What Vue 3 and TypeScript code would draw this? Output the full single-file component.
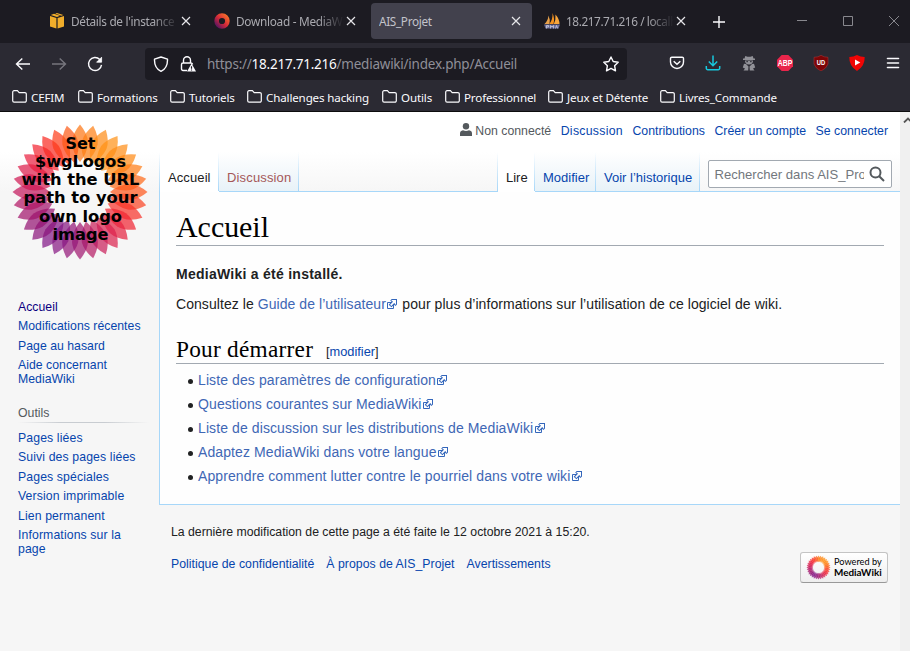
<script setup lang="ts">
interface Bookmark { label: string; width: number }
interface Petal { angle: number; color: string }

const bookmarks: Bookmark[] = [
  { label: 'CEFIM', width: 66 },
  { label: 'Formations', width: 92 },
  { label: 'Tutoriels', width: 77 },
  { label: 'Challenges hacking', width: 135 },
  { label: 'Outils', width: 63 },
  { label: 'Professionnel', width: 103 },
  { label: 'Jeux et Détente', width: 112 },
  { label: 'Livres_Commande', width: 140 },
]

const mainLinks: string[] = ['Accueil', 'Modifications récentes', 'Page au hasard', 'Aide concernant MediaWiki']
const toolLinks: string[] = [
  'Pages liées', 'Suivi des pages liées', 'Pages spéciales',
  'Version imprimable', 'Lien permanent', 'Informations sur la page',
]
const startLinks: string[] = [
  'Liste des paramètres de configuration',
  'Questions courantes sur MediaWiki',
  'Liste de discussion sur les distributions de MediaWiki',
  'Adaptez MediaWiki dans votre langue',
  'Apprendre comment lutter contre le pourriel dans votre wiki',
]
const logoLines: { text: string; length: number }[] = [
  { text: 'Set', length: 30 },
  { text: '$wgLogos', length: 91 },
  { text: 'with the URL', length: 118 },
  { text: 'path to your', length: 114 },
  { text: 'own logo', length: 83 },
  { text: 'image', length: 56 },
]

// Colour stops around the flower, clockwise from the top.
const wheel: number[][] = [
  [252, 115, 15], [255, 145, 20], [255, 135, 15], [255, 85, 25],
  [245, 35, 45], [215, 30, 80], [160, 20, 110], [125, 20, 135],
  [150, 15, 110], [195, 20, 90], [230, 25, 65], [253, 40, 25],
]
const petalCount = 32
const petals: Petal[] = Array.from({ length: petalCount }, (_, i) => {
  const pos = (i / petalCount) * wheel.length
  const a = wheel[Math.floor(pos) % wheel.length]
  const b = wheel[(Math.floor(pos) + 1) % wheel.length]
  const f = pos - Math.floor(pos)
  const mix = a.map((v, k) => Math.round(v + (b[k] - v) * f))
  return { angle: (i * 360) / petalCount, color: `rgb(${mix.join(',')})` }
})
const petalPath = 'M0-67.500Q7.500-58.500 8-50Q7.500-39 0-30Q-7.500-39-8-50Q-7.500-58.500 0-67.500z'
</script>

<template>
  <div class="window">
    <header class="chrome">
      <div class="tabstrip">
        <div class="tab t1">
          <svg class="fav" viewBox="0 0 16 16"><path d="M1 3 7.400 5v10.500L1 13.500zM15 3 8.600 5v10.500L15 13.500zM1.800 2 5 .7 11 2.700 8 4zM6.200.4 8 0l6.300 2-2 .8z" fill="#f0ad2b" /></svg>
          <span class="tab-title fade">Détails de l'instance</span>
          <svg class="close" viewBox="0 0 10 10"><path d="M1 1l8 8M9 1 1 9" /></svg>
        </div>
        <div class="tab t2">
          <svg class="fav" viewBox="0 0 16 16">
            <defs><linearGradient id="ring" x1="1" y1="0" x2="0" y2="1"><stop offset="0" stop-color="#f5702b" /><stop offset=".5" stop-color="#d72b38" /><stop offset="1" stop-color="#5c155f" /></linearGradient></defs>
            <circle cx="8" cy="8" r="5.400" fill="none" stroke="url(#ring)" stroke-width="4.600" />
          </svg>
          <span class="tab-title fade">Download - MediaWiki</span>
          <svg class="close" viewBox="0 0 10 10"><path d="M1 1l8 8M9 1 1 9" /></svg>
        </div>
        <div class="tab t3">
          <span class="tab-title">AIS_Projet</span>
          <svg class="close" viewBox="0 0 10 10"><path d="M1 1l8 8M9 1 1 9" /></svg>
        </div>
        <div class="tab t4">
          <svg class="fav" viewBox="0 0 16 16">
            <path d="M.5 11Q4 8 4.500 2.500Q6.500 7 5.500 11z" fill="#e9a24c" /><path d="M5.500 11Q9 6 8.500 0Q11 6 9.500 11z" fill="#f6921e" /><path d="M9.800 11Q12 7 11.500 1.500Q15.500 6 15.500 11z" fill="#f8a63c" />
            <path d="M0 11.500l1.500 4h13l1.500-4z" fill="#6a6d98" /><path d="M2.500 15.500v-3h2v1.500h-2M6.500 15.500v-3l1.500 1.500 1.500-1.500v3M11.500 15.500l1-3 1.200 3" fill="none" stroke="#c9cbe0" stroke-width=".8" />
          </svg>
          <span class="tab-title fade">18.217.71.216 / localhost</span>
          <svg class="close" viewBox="0 0 10 10"><path d="M1 1l8 8M9 1 1 9" /></svg>
        </div>
        <svg class="newtab" viewBox="0 0 12 12"><path d="M6 0v12M0 6h12" /></svg>
        <div class="winctl">
          <svg viewBox="0 0 12 12"><path d="M1 5.500h10" /></svg>
          <svg viewBox="0 0 12 12"><path d="M1.500 1.500h9v9h-9z" /></svg>
          <svg viewBox="0 0 12 12"><path d="M1 1l10 10M11 1 1 11" /></svg>
        </div>
      </div>

      <div class="toolbar">
        <svg class="nav back" viewBox="0 0 16 16"><path d="M15 8H1.500M7.300 2.500 1.500 8l5.800 5.500" /></svg>
        <svg class="nav forward" viewBox="0 0 16 16"><path d="M1 8h13.500M8.700 2.500 14.500 8l-5.800 5.500" /></svg>
        <svg class="nav reload" viewBox="0 0 16 16"><path d="M12.800 3.600A6.500 6.500 0 1 0 14.500 8.800" /><path d="M14.600 1.200v5h-5z" stroke-linejoin="round" /></svg>
        <div class="urlbar">
          <svg class="shield" viewBox="0 0 16 16"><path d="M8 1 14.500 3.200C14.700 9 12.700 13 8 15.300 3.300 13 1.300 9 1.500 3.200z" /></svg>
          <svg class="lock" viewBox="0 0 16 16"><path d="M3.500 7V4.300a3.300 3.300 0 0 1 7 0V7M7 14.500H3a1.500 1.500 0 0 1-1.500-1.500V8.500A1.500 1.500 0 0 1 3 7h8a1.500 1.500 0 0 1 1.500 1.500" /><path d="M11.500 7.500 16 15.500H7z" fill="#fbfbfe" /><path d="M11.500 10.300v2.500M11.500 13.500v1" stroke="#1c1b22" stroke-width="1.200" /></svg>
          <span class="url">https://<b>18.217.71.216</b>/mediawiki/index.php/Accueil</span>
          <svg class="star" viewBox="0 0 16 16"><path d="M8 1 10.200 5.500 15.200 6.200 11.600 9.700 12.500 14.800 8 12.400 3.500 14.800 4.400 9.700.8 6.200 5.800 5.500z" /></svg>
        </div>
        <div class="extensions">
          <svg viewBox="0 0 16 16"><path d="M2.800 2.200h10.400a1.300 1.300 0 0 1 1.300 1.300V7a6.500 6.500 0 0 1-13 0V3.500a1.300 1.300 0 0 1 1.300-1.300z" fill="none" stroke="#fbfbfe" stroke-width="1.400" /><path d="M4.700 6.200 8 9.200l3.300-3" fill="none" stroke="#fbfbfe" stroke-width="1.500" /></svg>
          <svg viewBox="0 0 16 16"><path d="M8 .5v10M3.800 6.500 8 10.700l4.200-4.200M1.300 11v2.200a1.500 1.500 0 0 0 1.500 1.500h10.400a1.500 1.500 0 0 0 1.500-1.500V11" fill="none" stroke="#17c9df" stroke-width="1.500" /></svg>
          <svg viewBox="0 0 16 16"><g fill="#919198"><path d="M4.300 1 6.500 1.800h3L11.700 1l.8 2.500H14V5H2V3.500h1.500z" /><path d="M4 5.500h8Q12 9.500 8 9.500T4 5.500z" /><path d="M3 8.700 5 9l2.500 2.500-.3 4H2.500L4 13.500 1.800 12.500zM13 8.700 11 9l-2.500 2.500.3 4h4.700L12 13.500l2.200-1z" /></g><path d="M5.300 6.700h1.700M9 6.700h1.700" stroke="#2b2a33" /></svg>
          <svg viewBox="0 0 16 16"><path d="M4.700 0h6.600L16 4.700v6.600L11.300 16H4.700L0 11.300V4.700z" fill="#e9254b" /><text x="8" y="11" class="abp" textLength="14.600" lengthAdjust="spacingAndGlyphs">ABP</text></svg>
          <svg viewBox="0 0 16 16"><path d="M8 .3Q11 2.300 15 2.300V9Q13.500 13.500 8 16 2.500 13.500 1 9V2.300Q5 2.300 8 .3z" fill="#7c0507" stroke="#ad3b3d" stroke-width=".5" /><text x="8" y="9.800" class="ublock" textLength="8.400" lengthAdjust="spacingAndGlyphs">UD</text></svg>
          <svg viewBox="0 0 16 16"><path d="M8 0Q11.500 2 15.700 2Q16 11 8 16Q0 11 .3 2Q4.500 2 8 0z" fill="#f00505" /><path d="M6 4.500 11.300 7.500 6 10.500z" fill="#fff" /></svg>
          <svg viewBox="0 0 16 16"><path d="M2.500 3.500h11M2.500 8h11M2.500 12.500h11" stroke="#fbfbfe" stroke-width="1.600" stroke-linecap="round" /></svg>
        </div>
      </div>

      <nav class="bookmarks">
        <div v-for="b in bookmarks" :key="b.label" class="bookmark" :style="{ width: b.width + 'px' }">
          <svg viewBox="0 0 15 13"><path d="M.7 10.800V2.100A1.400 1.400 0 0 1 2.100.7h3.300L7.200 2.600h5.700a1.400 1.400 0 0 1 1.400 1.400v6.800a1.400 1.400 0 0 1-1.400 1.400H2.100A1.400 1.400 0 0 1 .7 10.800z" /></svg>
          <span>{{ b.label }}</span>
        </div>
      </nav>
    </header>

    <div class="viewport">
      <aside class="sidebar">
        <svg class="logo" viewBox="-70 -70 140 140">
          <path v-for="p in petals" :key="p.angle" :d="petalPath" :fill="p.color" fill-opacity=".7" :transform="`rotate(${p.angle})`" />
          <text v-for="(line, i) in logoLines" :key="line.text" x="0.500" :y="-43.500 + i * 18.300" :textLength="line.length" lengthAdjust="spacingAndGlyphs">{{ line.text }}</text>
        </svg>
        <ul class="side-list">
          <li v-for="(l, i) in mainLinks" :key="l"><a :class="{ visited: i === 0 }">{{ l }}</a></li>
        </ul>
        <h3>Outils</h3>
        <ul class="side-list tools">
          <li v-for="l in toolLinks" :key="l"><a>{{ l }}</a></li>
        </ul>
      </aside>

      <main class="main">
        <div class="personal">
          <svg viewBox="0 0 12 13"><circle cx="6" cy="3.300" r="3.200" /><path d="M0 13V10.500Q0 7.800 3 7.200Q6 8.600 9 7.200Q12 7.800 12 10.500V13z" /></svg>
          <span class="anon">Non connecté</span>
          <a class="talk">Discussion</a><a>Contributions</a><a>Créer un compte</a><a>Se connecter</a>
        </div>
        <div class="tabsrow">
          <div class="ptab current first">Accueil</div>
          <div class="ptab missing">Discussion</div>
          <div class="gap"></div>
          <div class="ptab current read">Lire</div>
          <div class="ptab edit">Modifier</div>
          <div class="ptab history">Voir l’historique</div>
          <div class="searchwrap">
            <div class="search">
              <span>Rechercher dans AIS_Projet</span>
              <svg viewBox="0 0 16 16"><circle cx="6.500" cy="6.500" r="5" /><path d="M10.200 10.200 15 15" /></svg>
            </div>
          </div>
        </div>

        <article class="content">
          <h1>Accueil</h1>
          <p class="bold">MediaWiki a été installé.</p>
          <p class="intro">Consultez le <a>Guide de l’utilisateur</a><svg class="ext" viewBox="0 0 12 12"><path class="box" d="M1.500 4.518h5.982V10.500H1.500z" /><path class="arrow" d="M5.765 1H11v5.390L9.427 7.937l-1.310-1.310L5.393 9.350l-2.690-2.688 2.810-2.808L4.200 2.544z" /><path class="core" d="m9.995 2.004.022 4.885L8.200 5.070 5.320 7.950 4.090 6.723l2.882-2.880-1.850-1.852z" /></svg> pour plus d’informations sur l’utilisation de ce logiciel de wiki.</p>
          <h2><span>Pour démarrer</span><small>[<a>modifier</a>]</small></h2>
          <ul>
            <li v-for="l in startLinks" :key="l"><a>{{ l }}</a><svg class="ext" viewBox="0 0 12 12"><path class="box" d="M1.500 4.518h5.982V10.500H1.500z" /><path class="arrow" d="M5.765 1H11v5.390L9.427 7.937l-1.310-1.310L5.393 9.350l-2.690-2.688 2.810-2.808L4.200 2.544z" /><path class="core" d="m9.995 2.004.022 4.885L8.200 5.070 5.320 7.950 4.090 6.723l2.882-2.880-1.850-1.852z" /></svg></li>
          </ul>
        </article>

        <footer class="footer">
          <p>La dernière modification de cette page a été faite le 12 octobre 2021 à 15:20.</p>
          <div class="footer-row">
            <a>Politique de confidentialité</a><a>À propos de AIS_Projet</a><a>Avertissements</a>
            <div class="powered">
              <svg viewBox="-70 -70 140 140"><path v-for="p in petals" :key="p.angle" :d="petalPath" :fill="p.color" fill-opacity=".72" :transform="`rotate(${p.angle})`" /></svg>
              <div><span>Powered by</span><strong>MediaWiki</strong></div>
            </div>
          </div>
        </footer>
      </main>
      <div class="scrollbar"><svg viewBox="0 0 10 6"><path d="M1 5.500 5 1.500 9 5.500" /></svg></div>
    </div>
  </div>
</template>

<style>
body { margin: 0; overflow: hidden; }
</style>

<style scoped>
* { box-sizing: border-box; }
svg { display: block; flex: none; }
ul, p, h1, h2, h3 { margin: 0; padding: 0; font-weight: normal; list-style: none; }
.window { width: 910px; height: 651px; overflow: hidden; display: flex; flex-direction: column; font-family: "Liberation Sans", Arial, sans-serif; }
.chrome { height: 112px; background: #2b2a33; border-bottom: 1px solid #0c0c0d; font-family: "Noto Sans", "Segoe UI", sans-serif; color: #fbfbfe; }
.tabstrip { height: 43px; background: #1c1b22; display: flex; align-items: center; padding-left: 42px; }
.tab { height: 36px; display: flex; align-items: center; margin-top: -1px; font-size: 11.8px; color: #aaaab0; }
.tab-title { flex: 1; min-width: 0; overflow: hidden; white-space: nowrap; }
.fade { -webkit-mask-image: linear-gradient(to right, #000 calc(100% - 26px), transparent); mask-image: linear-gradient(to right, #000 calc(100% - 26px), transparent); }
.fav { width: 16px; height: 16px; margin-right: 6px; }
.close { width: 10px; height: 10px; margin-left: 5px; }
.close path { fill: none; stroke: #e6e6ea; stroke-width: 1.2; }
.t1 { width: 165px; padding: 0 16px 0 7px; letter-spacing: -.32px; }
.t2 { width: 164px; padding: 0 15px 0 7px; letter-spacing: -.28px; }
.t3 { width: 161px; padding: 0 11px 0 8px; background: #42414d; border-radius: 4px; letter-spacing: -.35px; color: #c3c3ca; }
.t4 { width: 166px; padding: 0 12px 0 12px; letter-spacing: -.42px; }
.t1 .close, .t2 .close, .t4 .close { margin-left: 2px; }
.newtab { width: 12px; height: 12px; margin-left: 14.500px; }
.newtab path { stroke: #fbfbfe; stroke-width: 1.4; }
.winctl { display: flex; gap: 34px; margin-left: 71.500px; margin-top: -1px; }
.winctl svg { width: 12px; height: 12px; }
.winctl path { fill: none; stroke: #88888e; stroke-width: 1; }
.toolbar { height: 41px; display: flex; align-items: center; padding: 0 9px 0 15px; }
.nav { width: 16px; height: 16px; margin-right: 20px; }
.nav path { fill: none; stroke: #fbfbfe; stroke-width: 1.4; }
.nav.forward path { stroke: #77767e; }
.nav.reload { margin-right: 42px; }
.nav.reload path:last-child { fill: #fbfbfe; stroke-width: .8; }
.urlbar { width: 482px; height: 32px; background: #1c1b22; border-radius: 4px; display: flex; align-items: center; padding: 0 8px; }
.urlbar svg { width: 16px; height: 16px; }
.shield path, .lock path:first-child, .star path { fill: none; stroke: #fbfbfe; stroke-width: 1.4; stroke-linejoin: round; }
.lock { margin-left: 11px; }
.url { flex: 1; margin-left: 11px; font-size: 13.5px; color: #8f8f98; letter-spacing: -.24px; white-space: nowrap; }
.url b { color: #fbfbfe; font-weight: normal; }
.extensions { flex: 1; display: flex; justify-content: space-between; padding-left: 42px; }
.extensions svg { width: 16px; height: 16px; margin-top: -1px; }
.abp { fill: #fff; font: bold 8.5px "Liberation Sans", sans-serif; text-anchor: middle; }
.ublock { fill: #fff; font: bold 6.3px "Liberation Sans", sans-serif; text-anchor: middle; }
.bookmarks { height: 27px; display: flex; align-items: center; padding-left: 12px; }
.bookmark { flex: none; display: flex; align-items: center; gap: 4px; font-size: 11.6px; letter-spacing: -.15px; white-space: nowrap; }
.bookmark svg { width: 15px; height: 13px; margin-top: -2px; }
.bookmark path { fill: none; stroke: #fbfbfe; stroke-width: 1.2; }

.viewport { flex: 1; display: flex; background: linear-gradient(#fff 0, #fff 40px, #f6f6f6 80px); }
.sidebar { width: 159px; padding: 10px 10px 0 10px; font-size: 12.25px; line-height: 13.5px; }
.logo { width: 140px; height: 140px; margin: 0 0 35.5px -.5px; }
.logo text { font: bold 15.7px "DejaVu Sans", sans-serif; text-anchor: middle; fill: #000; }
a { color: #0645ad; }
.side-list { padding-left: 8px; letter-spacing: .03px; }
.side-list.tools { letter-spacing: .12px; }
.side-list li { padding: 3px 0; }
.side-list a.visited { color: #0b0080; }
.sidebar h3 { margin: 13.5px 0 6px 8px; height: 20px; padding-top: 3px; font-size: 12.3px; line-height: 14px; color: #54595d; background: linear-gradient(to right, transparent, #c8ccd1 33%, #c8ccd1 66%, transparent) bottom / 100% 1px no-repeat; }
.main { width: 741px; }
.personal { height: 40px; display: flex; align-items: center; justify-content: flex-end; gap: 9.5px; padding: 0 12px 2px 0; font-size: 12.3px; white-space: nowrap; }
.personal svg { width: 12px; height: 13px; fill: #54595d; margin: -3px -6.5px 0 0; }
.anon { color: #54595d; }
.talk { letter-spacing: .28px; }
.tabsrow { height: 40px; display: flex; padding-left: 1px; font-size: 13px; background: linear-gradient(#a7d7f900, #a7d7f9) left / 1px 100% no-repeat; }
.ptab { padding: 17px 0 0 8px; border-bottom: 1px solid #a7d7f9; background: linear-gradient(#a7d7f900, #a7d7f9) right / 1px 100% no-repeat, linear-gradient(#fff, #e8f2f8); color: #0645ad; white-space: nowrap; line-height: 17px; }
.ptab.current { background: linear-gradient(#a7d7f900, #a7d7f9) right / 1px 100% no-repeat, #fff; border-bottom-color: #fff; color: #202122; }
.first { width: 59px; letter-spacing: .1px; }
.missing { width: 80px; letter-spacing: .15px; }
.ptab.missing { color: #a55858; }
.gap { width: 199px; border-bottom: 1px solid #a7d7f9; background: linear-gradient(#a7d7f900, #a7d7f9) right / 1px 100% no-repeat; }
.read { width: 37px; }
.edit { width: 61px; }
.history { width: 104px; }
.searchwrap { flex: 1; border-bottom: 1px solid #a7d7f9; padding: 8px 8px 0; }
.search { width: 184px; height: 28px; border: 1px solid #a2a9b1; border-radius: 2px; background: #fff; display: flex; align-items: center; padding: 0 6px 0 5.5px; }
.search span { width: 149px; overflow: hidden; white-space: nowrap; color: #72777d; font-size: 13.1px; letter-spacing: 0; }
.search svg { width: 16px; height: 16px; margin-left: 5px; }
.search circle, .search path { fill: none; stroke: #54595d; stroke-width: 2; }
.content { height: 313px; background: #fefefe; border: solid #a7d7f9; border-width: 0 0 1px 1px; padding: 0 16px; color: #202122; font-size: 14px; letter-spacing: .08px; }
.content h1 { height: 54px; padding-top: 17px; border-bottom: 1px solid #a2a9b1; font: 30px/36px "Liberation Serif", Georgia, serif; letter-spacing: -.05px; color: #000; }
.bold { margin-top: 17px; font-weight: bold; line-height: 22px; letter-spacing: .26px; }
.intro { margin-top: 8px; line-height: 22px; white-space: nowrap; letter-spacing: .06px; }
.content a { color: #3f67b5; }
.ext { display: inline-block; width: 12px; height: 12px; margin-left: .5px; vertical-align: -1px; }
.ext .box { fill: #fff; stroke: #3366bb; }
.ext .arrow { fill: #3366bb; }
.ext .core { fill: #fff; }
.content h2 { display: flex; align-items: baseline; margin-top: 10px; height: 39px; padding-top: 9px; border-bottom: 1px solid #a2a9b1; font: 23.3px/30px "Liberation Serif", Georgia, serif; color: #000; }
.content h2 > span { width: 150px; letter-spacing: .25px; }
.content h2 small { position: relative; top: -1px; font: 12.8px "Liberation Sans", sans-serif; letter-spacing: 0; color: #202122; }
.content h2 a { color: #0645ad; }
.content ul { padding-top: 4px; letter-spacing: .1px; }
.content li { position: relative; height: 24px; line-height: 25px; padding-left: 22px; white-space: nowrap; }
.content li::before { content: ""; position: absolute; left: 12px; top: 11px; width: 5px; height: 5px; border-radius: 50%; background: #202122; }
.footer { padding: 19px 12px 0; font-size: 12.27px; }
.footer p { line-height: 16px; color: #202122; }
.footer-row { display: flex; align-items: flex-start; gap: 12px; padding-top: 12px; letter-spacing: .03px; }
.footer-row a { line-height: 24px; }
.powered { margin: 0 0 0 auto; width: 88px; height: 31px; border: 1px solid #c4c4c4; border-bottom-color: #999; border-radius: 3px; background: linear-gradient(#fff, #eee); display: flex; align-items: center; gap: 3px; padding-left: 5px; color: #000; }
.powered svg { width: 25px; height: 25px; }
.powered div { display: flex; flex-direction: column; margin-top: -2px; font: 9.2px/10px Lato, sans-serif; letter-spacing: 0; }
.powered strong { font-size: 9.9px; }
.scrollbar { width: 10px; background: #f0f0f0; padding: 5px 0 0 3px; }
.scrollbar svg { width: 10px; height: 6px; }
.scrollbar path { fill: none; stroke: #555; stroke-width: 1.8; }
</style>
